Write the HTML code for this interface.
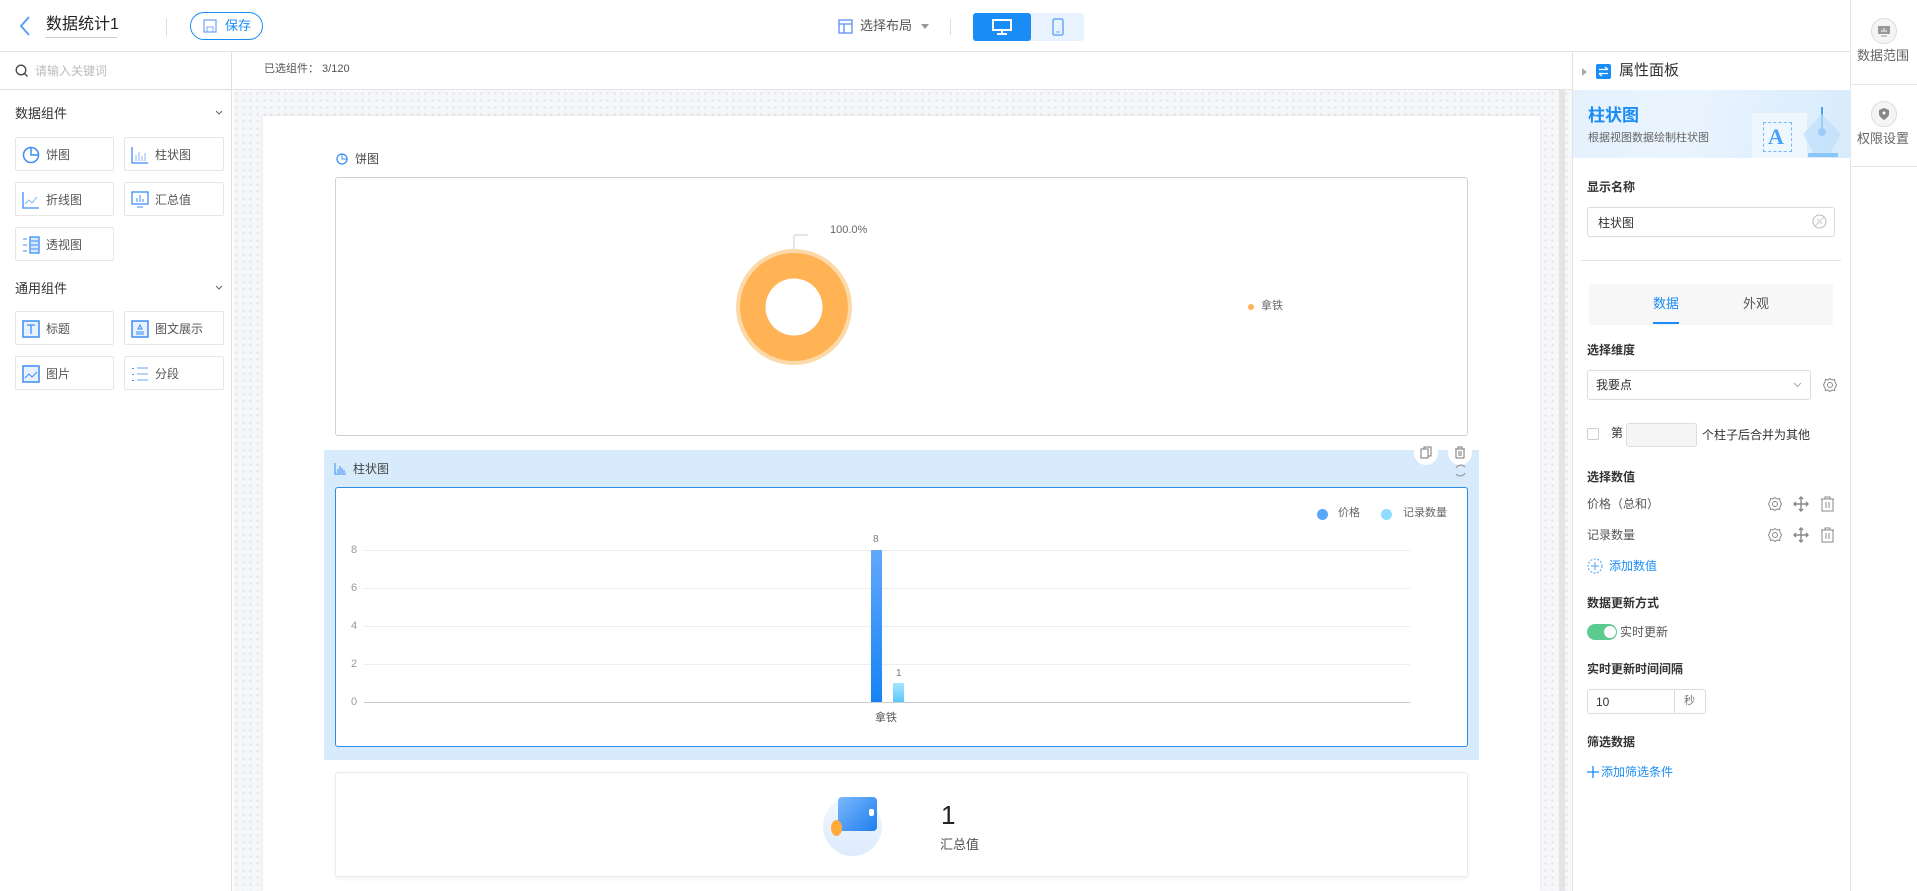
<!DOCTYPE html>
<html><head><meta charset="utf-8"><style>
*{box-sizing:border-box;margin:0;padding:0}
body{width:1917px;height:891px;overflow:hidden;background:#fff;font-family:"Liberation Sans","Noto Sans CJK SC",sans-serif;color:#333;font-size:12px;position:relative}
.a{position:absolute}
.t{position:absolute;white-space:nowrap;line-height:1}
.box{position:absolute;border:1px solid #e6e6e6;border-radius:2px;background:#fff}
.li{font-size:12px!important;color:#555}
</style></head><body>
<!-- top bar -->
<div class="a" style="left:0;top:0;width:1850px;height:52px;border-bottom:1px solid #e3e3e3;box-shadow:0 1px 3px rgba(0,0,0,.06)"></div>
<svg class="a" style="left:18px;top:15px" width="14" height="22"><path d="M11 2 L3 11 L11 20" stroke="#5aa0f7" stroke-width="2" fill="none"/></svg>
<div class="t" style="left:46px;top:17px;font-size:16px;color:#222">数据统计1</div>
<div class="a" style="left:45px;top:37px;width:72px;height:1px;background:#ccc"></div>
<div class="a" style="left:166px;top:18px;width:1px;height:18px;background:#ddd"></div>
<div class="a" style="left:190px;top:12px;width:73px;height:28px;border:1px solid #1a8cf5;border-radius:14px"></div>
<svg class="a" style="left:203px;top:19px" width="14" height="14"><rect x="1" y="1" width="12" height="12" fill="none" stroke="#7aa8f0" stroke-width="1.3"/><rect x="4" y="8" width="6" height="5" fill="none" stroke="#7aa8f0"/></svg>
<div class="t" style="left:225px;top:19px;font-size:13px;color:#1a8cf5">保存</div>
<svg class="a" style="left:838px;top:19px" width="15" height="15"><rect x="1" y="1" width="13" height="13" fill="none" stroke="#5a8ff0" stroke-width="1.3"/><path d="M1 5H14M6 5V14" stroke="#5a8ff0" stroke-width="1.3"/></svg>
<div class="t" style="left:860px;top:19px;font-size:13px;color:#555">选择布局</div>
<svg class="a" style="left:921px;top:24px" width="8" height="5"><path d="M0 0H8L4 5Z" fill="#999"/></svg>
<div class="a" style="left:950px;top:19px;width:1px;height:16px;background:#ddd"></div>
<div class="a" style="left:973px;top:13px;width:111px;height:28px;background:#e8f3ff;border-radius:3px"></div>
<div class="a" style="left:973px;top:13px;width:58px;height:28px;background:#1a8cf5;border-radius:3px"></div>
<svg class="a" style="left:992px;top:19px" width="20" height="16"><rect x="1" y="1" width="18" height="10" fill="none" stroke="#fff" stroke-width="2"/><path d="M10 11V14M5 15H15" stroke="#fff" stroke-width="2"/></svg>
<svg class="a" style="left:1052px;top:18px" width="12" height="18"><rect x="1" y="1" width="10" height="16" rx="1.5" fill="none" stroke="#6aa8f5" stroke-width="1.5"/><path d="M4 14H8" stroke="#6aa8f5"/></svg>

<!-- right rail -->
<div class="a" style="left:1850px;top:0;width:67px;height:891px;border-left:1px solid #e6e6e6;background:#fff"></div>
<div class="a" style="left:1871px;top:18px;width:26px;height:26px;border-radius:50%;border:1px solid #ddd;background:#f5f5f5"></div>
<svg class="a" style="left:1877px;top:25px" width="14" height="12"><rect x="1" y="1" width="12" height="8" fill="#999"/><path d="M4 11H10" stroke="#999"/><path d="M5 7V5M7 7V3M9 7V5" stroke="#fff"/></svg>
<div class="t" style="left:1857px;top:49px;font-size:13px;color:#666">数据范围</div>
<div class="a" style="left:1851px;top:84px;width:66px;height:1px;background:#e6e6e6"></div>
<div class="a" style="left:1871px;top:101px;width:26px;height:26px;border-radius:50%;border:1px solid #ddd;background:#f5f5f5"></div>
<svg class="a" style="left:1878px;top:107px" width="12" height="14"><path d="M6 1L11 3V7C11 10 6 13 6 13C6 13 1 10 1 7V3Z" fill="#888"/><circle cx="6" cy="6" r="1.5" fill="#fff"/></svg>
<div class="t" style="left:1857px;top:132px;font-size:13px;color:#666">权限设置</div>
<div class="a" style="left:1851px;top:166px;width:66px;height:1px;background:#e6e6e6"></div>

<!-- left panel -->
<div class="a" style="left:0;top:52px;width:232px;height:839px;border-right:1px solid #e0e0e0;background:#fff"></div>
<div class="a" style="left:0;top:89px;width:232px;height:1px;background:#ddd"></div>
<svg class="a" style="left:15px;top:64px" width="14" height="14"><circle cx="6" cy="6" r="4.8" fill="none" stroke="#444" stroke-width="1.3"/><path d="M9.5 9.5L12.5 12.5" stroke="#444" stroke-width="1.3"/></svg>
<div class="t" style="left:35px;top:65px;font-size:12px;color:#bbb">请输入关键词</div>
<div class="t" style="left:15px;top:107px;font-size:13px;color:#333">数据组件</div>
<svg class="a" style="left:215px;top:110px" width="8" height="6"><path d="M1 1L4 4L7 1" stroke="#666" fill="none"/></svg>
<div class="box" style="left:15px;top:137px;width:99px;height:34px"></div>
<div class="box" style="left:124px;top:137px;width:100px;height:34px"></div>
<div class="box" style="left:15px;top:182px;width:99px;height:34px"></div>
<div class="box" style="left:124px;top:182px;width:100px;height:34px"></div>
<div class="box" style="left:15px;top:227px;width:99px;height:34px"></div>
<svg class="a" style="left:22px;top:146px" width="18" height="18"><circle cx="9" cy="9" r="7.5" fill="none" stroke="#3d8ef5" stroke-width="1.5"/><path d="M9 2V9H16" stroke="#3d8ef5" stroke-width="1.5" fill="none"/></svg>
<div class="t li" style="left:46px;top:149px">饼图</div>
<svg class="a" style="left:131px;top:146px" width="18" height="18"><path d="M1 1V17H17" stroke="#3d8ef5" stroke-width="1.3" fill="none"/><path d="M5 15V9M8 15V6M11 15V10M14 15V7" stroke="#8ab8f5"/></svg>
<div class="t li" style="left:155px;top:149px">柱状图</div>
<svg class="a" style="left:22px;top:191px" width="18" height="18"><path d="M1 1V17H17" stroke="#3d8ef5" stroke-width="1.3" fill="none"/><path d="M3 13L7 9L10 12L15 6" stroke="#8ab8f5" fill="none"/></svg>
<div class="t li" style="left:46px;top:194px">折线图</div>
<svg class="a" style="left:131px;top:191px" width="18" height="18"><rect x="1" y="1" width="16" height="12" fill="none" stroke="#3d8ef5" stroke-width="1.3"/><path d="M6 11V7M9 11V4M12 11V8M6 16H12" stroke="#3d8ef5"/></svg>
<div class="t li" style="left:155px;top:194px">汇总值</div>
<svg class="a" style="left:22px;top:236px" width="18" height="18"><rect x="8" y="1" width="9" height="16" fill="#d8e8fc" stroke="#3d8ef5" stroke-width="1.3"/><path d="M1 3H5M1 9H5M1 15H5M9 5H16M9 9H16M9 13H16" stroke="#3d8ef5"/></svg>
<div class="t li" style="left:46px;top:239px">透视图</div>
<div class="t" style="left:15px;top:282px;font-size:13px;color:#333">通用组件</div>
<svg class="a" style="left:215px;top:285px" width="8" height="6"><path d="M1 1L4 4L7 1" stroke="#666" fill="none"/></svg>
<div class="box" style="left:15px;top:311px;width:99px;height:34px"></div>
<div class="box" style="left:124px;top:311px;width:100px;height:34px"></div>
<div class="box" style="left:15px;top:356px;width:99px;height:34px"></div>
<div class="box" style="left:124px;top:356px;width:100px;height:34px"></div>
<svg class="a" style="left:22px;top:320px" width="18" height="18"><rect x="1" y="1" width="16" height="16" fill="#e8f2fe" stroke="#3d8ef5" stroke-width="1.5"/><path d="M5 5H13M9 5V14" stroke="#3d8ef5" stroke-width="1.3"/></svg>
<div class="t li" style="left:46px;top:323px">标题</div>
<svg class="a" style="left:131px;top:320px" width="18" height="18"><rect x="1" y="1" width="16" height="16" fill="#e8f2fe" stroke="#3d8ef5" stroke-width="1.5"/><path d="M5 12H13M5 14H13M7 9L9 5L11 9Z" stroke="#3d8ef5" fill="none"/></svg>
<div class="t li" style="left:155px;top:323px">图文展示</div>
<svg class="a" style="left:22px;top:365px" width="18" height="18"><rect x="1" y="1" width="16" height="16" fill="#e8f2fe" stroke="#3d8ef5" stroke-width="1.5"/><path d="M3 13L7 9L10 12L15 7" stroke="#3d8ef5" fill="none"/></svg>
<div class="t li" style="left:46px;top:368px">图片</div>
<svg class="a" style="left:131px;top:365px" width="18" height="18"><path d="M2 3V4M2 9V10M2 15V16" stroke="#3d8ef5" stroke-width="2"/><path d="M6 3H17M6 9H17M6 15H17" stroke="#8ab8f5" stroke-width="1.3"/></svg>
<div class="t li" style="left:155px;top:368px">分段</div>

<!-- canvas -->
<div class="a" style="left:233px;top:52px;width:1339px;height:38px;background:#fff;border-bottom:1px solid #e3e3e3"></div>
<div class="t" style="left:264px;top:64px;font-size:11px;color:#555">已选组件：&nbsp;3/120</div>
<div class="a" style="left:233px;top:90px;width:1339px;height:801px;background-color:#f6f7f9;background-image:radial-gradient(#dfe1e6 1px,transparent 1.2px);background-size:7px 7px"></div>
<div class="a" style="left:1559px;top:90px;width:6px;height:801px;background:#e4e4e4"></div>
<div class="a" style="left:263px;top:116px;width:1277px;height:775px;background:#fff;box-shadow:0 0 4px rgba(0,0,0,.08)"></div>
<!-- pie -->
<svg class="a" style="left:336px;top:153px" width="12" height="12"><circle cx="6" cy="6" r="5" fill="none" stroke="#3d8ef5" stroke-width="1.3"/><path d="M6 1V6H11" stroke="#3d8ef5" fill="none"/></svg>
<div class="t" style="left:355px;top:153px;font-size:12px;color:#444">饼图</div>
<div class="a" style="left:335px;top:177px;width:1133px;height:259px;border:1px solid #d0d0d0;border-radius:3px"></div>
<svg class="a" style="left:730px;top:225px" width="140" height="150"><path d="M64 10V24M64 10H78" stroke="#ccc" fill="none"/><circle cx="64" cy="82" r="58" fill="#fcd9a8"/><circle cx="64" cy="82" r="54" fill="#ffb355"/><circle cx="64" cy="82" r="28.5" fill="#fff"/></svg>
<div class="t" style="left:830px;top:225px;font-size:11px;color:#666">100.0%</div>
<div class="a" style="left:1248px;top:304px;width:6px;height:6px;border-radius:50%;background:#ffb355"></div>
<div class="t" style="left:1261px;top:301px;font-size:11px;color:#666">拿铁</div>
<!-- bar selected -->
<div class="a" style="left:324px;top:450px;width:1155px;height:310px;background:#d7ebfc"></div>
<div class="a" style="left:1414px;top:441px;width:24px;height:24px;border-radius:50%;background:#fff"></div>
<div class="a" style="left:1448px;top:441px;width:24px;height:24px;border-radius:50%;background:#fff"></div>
<svg class="a" style="left:1420px;top:446px" width="12" height="13"><rect x="4" y="1" width="7" height="9" fill="none" stroke="#777"/><rect x="1" y="3" width="7" height="9" fill="#fff" stroke="#777"/></svg>
<svg class="a" style="left:1454px;top:446px" width="12" height="13"><path d="M1 3H11M4 3V1H8V3M2 3V12H10V3M5 5V10M7 5V10" stroke="#777" fill="none"/></svg>
<svg class="a" style="left:1453px;top:463px" width="15" height="15"><path d="M3 5A5.5 5.5 0 0 1 12 4M12 10A5.5 5.5 0 0 1 3 11" stroke="#999" fill="none" stroke-width="1.2"/></svg>
<svg class="a" style="left:334px;top:463px" width="12" height="12"><path d="M1 0V11H12" stroke="#3d8ef5" fill="none"/><path d="M4 10V6M6 10V3M8 10V5M10 10V7" stroke="#3d8ef5"/></svg>
<div class="t" style="left:353px;top:463px;font-size:12px;color:#444">柱状图</div>
<div class="a" style="left:335px;top:487px;width:1133px;height:260px;border:1px solid #2b8ce8;border-radius:3px;background:#fff"></div>
<div class="a" style="left:1317px;top:509px;width:11px;height:11px;border-radius:50%;background:#5aa7fa"></div>
<div class="t" style="left:1338px;top:508px;font-size:11px;color:#666">价格</div>
<div class="a" style="left:1381px;top:509px;width:11px;height:11px;border-radius:50%;background:#8fdcfe"></div>
<div class="t" style="left:1403px;top:508px;font-size:11px;color:#666">记录数量</div>
<div class="a" style="left:364px;top:550px;width:1046px;height:1px;background:#eee"></div>
<div class="a" style="left:364px;top:588px;width:1046px;height:1px;background:#eee"></div>
<div class="a" style="left:364px;top:626px;width:1046px;height:1px;background:#eee"></div>
<div class="a" style="left:364px;top:664px;width:1046px;height:1px;background:#eee"></div>
<div class="a" style="left:364px;top:702px;width:1046px;height:1px;background:#ccc"></div>
<div class="t" style="left:351px;top:545px;font-size:11px;color:#999">8</div>
<div class="t" style="left:351px;top:583px;font-size:11px;color:#999">6</div>
<div class="t" style="left:351px;top:621px;font-size:11px;color:#999">4</div>
<div class="t" style="left:351px;top:659px;font-size:11px;color:#999">2</div>
<div class="t" style="left:351px;top:697px;font-size:11px;color:#999">0</div>
<div class="a" style="left:871px;top:550px;width:11px;height:152px;background:linear-gradient(#62a8fb,#1683f5)"></div>
<div class="a" style="left:893px;top:683px;width:11px;height:19px;background:linear-gradient(#a5e4ff,#5cc8fa)"></div>
<div class="t" style="left:873px;top:535px;font-size:10px;color:#777">8</div>
<div class="t" style="left:896px;top:669px;font-size:10px;color:#777">1</div>
<div class="t" style="left:875px;top:713px;font-size:11px;color:#555">拿铁</div>
<!-- summary -->
<div class="a" style="left:335px;top:772px;width:1133px;height:105px;border:1px solid #eaeaea;border-radius:3px;box-shadow:0 2px 4px rgba(0,0,0,.05)"></div>
<div class="a" style="left:823px;top:797px;width:59px;height:59px;border-radius:50%;background:linear-gradient(#f3f8ff,#dcebfc)"></div>
<div class="a" style="left:838px;top:797px;width:39px;height:34px;border-radius:4px;background:linear-gradient(135deg,#7ab8fb,#1f7ef0)"></div>
<div class="a" style="left:869px;top:809px;width:5px;height:7px;border-radius:2px;background:#fff"></div>
<div class="a" style="left:831px;top:820px;width:11px;height:16px;border-radius:50%;background:#ffab3b"></div>
<div class="t" style="left:941px;top:802px;font-size:26px;color:#222">1</div>
<div class="t" style="left:940px;top:838px;font-size:13px;color:#555">汇总值</div>

<!-- right property panel -->
<div class="a" style="left:1572px;top:52px;width:278px;height:839px;background:#fff;border-left:1px solid #e3e3e3"></div>
<svg class="a" style="left:1582px;top:68px" width="5" height="8"><path d="M0 0L5 4L0 8Z" fill="#aaa"/></svg>
<div class="a" style="left:1596px;top:64px;width:15px;height:15px;border-radius:2px;background:#1a8cf5"></div>
<svg class="a" style="left:1598px;top:66px" width="11" height="11"><path d="M1 3.5H10M7 1L10 3.5M1 7.5H10M4 10L1 7.5" stroke="#fff" fill="none" stroke-width="1.3"/></svg>
<div class="t" style="left:1619px;top:63px;font-size:15px;color:#333">属性面板</div>
<div class="a" style="left:1573px;top:90px;width:277px;height:68px;background:linear-gradient(100deg,#e4f1fd 0%,#eaf4fe 40%,#d8ebfc 100%)"></div>
<div class="a" style="left:1752px;top:113px;width:55px;height:45px;background:#eef6fe"></div>
<div class="a" style="left:1763px;top:122px;width:29px;height:30px;border:1px dashed #7ab8f5"></div>
<div class="t" style="left:1768px;top:126px;font-size:22px;font-weight:bold;color:#4aa0f5;font-family:'Liberation Serif',serif">A</div>
<svg class="a" style="left:1800px;top:102px" width="45" height="56"><path d="M22 5V30" stroke="#4aa0f5" stroke-width="2"/><circle cx="22" cy="30" r="4" fill="#4aa0f5"/><path d="M22 12L41 32L30 52H14L3 32Z" fill="#bfe0fb" opacity=".7"/><rect x="8" y="51" width="30" height="4" fill="#8ac6f8"/></svg>
<div class="t" style="left:1588px;top:107px;font-size:17px;font-weight:bold;color:#1a8cf5">柱状图</div>
<div class="t" style="left:1588px;top:133px;font-size:11px;color:#666">根据视图数据绘制柱状图</div>
<div class="t" style="left:1587px;top:181px;font-size:12px;color:#333;font-weight:bold">显示名称</div>
<div class="a" style="left:1587px;top:207px;width:248px;height:30px;border:1px solid #dcdcdc;border-radius:3px"></div>
<div class="t" style="left:1598px;top:217px;font-size:12px;color:#333">柱状图</div>
<svg class="a" style="left:1812px;top:214px" width="15" height="15"><circle cx="7.5" cy="7.5" r="6.5" fill="none" stroke="#bbb"/><path d="M3 12L12 3M5 5L10 10" stroke="#ccc"/></svg>
<div class="a" style="left:1581px;top:260px;width:260px;height:1px;background:#e3e3e3"></div>
<div class="a" style="left:1589px;top:284px;width:244px;height:41px;background:#f7f7f8"></div>
<div class="t" style="left:1653px;top:297px;font-size:13px;color:#1a8cf5">数据</div>
<div class="a" style="left:1653px;top:322px;width:26px;height:2px;background:#1a8cf5"></div>
<div class="t" style="left:1743px;top:297px;font-size:13px;color:#555">外观</div>
<div class="t" style="left:1587px;top:344px;font-size:12px;color:#333;font-weight:bold">选择维度</div>
<div class="a" style="left:1587px;top:370px;width:224px;height:30px;border:1px solid #dcdcdc;border-radius:3px"></div>
<div class="t" style="left:1596px;top:379px;font-size:12px;color:#333">我要点</div>
<svg class="a" style="left:1793px;top:382px" width="9" height="6"><path d="M1 1L4.5 4.5L8 1" stroke="#aaa" fill="none"/></svg>
<svg class="a" style="left:1822px;top:377px" width="16" height="16"><circle cx="8" cy="8" r="2.5" fill="none" stroke="#888"/><path d="M8 1.5L10 3L12.5 2.5L13 5L14.5 8L13 11L12.5 13.5L10 13L8 14.5L6 13L3.5 13.5L3 11L1.5 8L3 5L3.5 2.5L6 3Z" fill="none" stroke="#888"/></svg>
<div class="a" style="left:1587px;top:428px;width:12px;height:12px;border:1px solid #ccc;border-radius:2px"></div>
<div class="t" style="left:1611px;top:427px;font-size:12px;color:#333">第</div>
<div class="a" style="left:1626px;top:423px;width:71px;height:24px;border:1px solid #ddd;border-radius:3px;background:#f5f5f5"></div>
<div class="t" style="left:1702px;top:429px;font-size:12px;color:#333">个柱子后合并为其他</div>
<div class="t" style="left:1587px;top:471px;font-size:12px;color:#333;font-weight:bold">选择数值</div>
<div class="t" style="left:1587px;top:498px;font-size:12px;color:#555">价格（总和）</div>
<div class="t" style="left:1587px;top:529px;font-size:12px;color:#555">记录数量</div>
<svg class="a" style="left:1767px;top:496px" width="78" height="48">
<g fill="none" stroke="#888"><circle cx="8" cy="8" r="2.5"/><path d="M8 1.5L10 3L12.5 2.5L13 5L14.5 8L13 11L12.5 13.5L10 13L8 14.5L6 13L3.5 13.5L3 11L1.5 8L3 5L3.5 2.5L6 3Z"/>
<path d="M34 1V15M27 8H41M32 3L34 1L36 3M32 13L34 15L36 13M29 6L27 8L29 10M39 6L41 8L39 10" stroke-width="1.4"/>
<path d="M54 3H67M58 3V1H63V3M55 3V15H66V3M59 6V12M62 6V12"/>
<g transform="translate(0,31)"><circle cx="8" cy="8" r="2.5"/><path d="M8 1.5L10 3L12.5 2.5L13 5L14.5 8L13 11L12.5 13.5L10 13L8 14.5L6 13L3.5 13.5L3 11L1.5 8L3 5L3.5 2.5L6 3Z"/>
<path d="M34 1V15M27 8H41M32 3L34 1L36 3M32 13L34 15L36 13M29 6L27 8L29 10M39 6L41 8L39 10" stroke-width="1.4"/>
<path d="M54 3H67M58 3V1H63V3M55 3V15H66V3M59 6V12M62 6V12"/></g></g></svg>
<svg class="a" style="left:1587px;top:558px" width="16" height="16"><circle cx="8" cy="8" r="7" fill="none" stroke="#4aa0f5" stroke-dasharray="2 1.5"/><path d="M8 4V12M4 8H12" stroke="#4aa0f5"/></svg>
<div class="t" style="left:1609px;top:560px;font-size:12px;color:#1a8cf5">添加数值</div>
<div class="t" style="left:1587px;top:597px;font-size:12px;color:#333;font-weight:bold">数据更新方式</div>
<div class="a" style="left:1587px;top:624px;width:30px;height:16px;border-radius:8px;background:#5ccb8f"></div>
<div class="a" style="left:1604px;top:626px;width:12px;height:12px;border-radius:50%;background:#fff"></div>
<div class="t" style="left:1620px;top:626px;font-size:12px;color:#555">实时更新</div>
<div class="t" style="left:1587px;top:663px;font-size:12px;color:#333;font-weight:bold">实时更新时间间隔</div>
<div class="a" style="left:1587px;top:689px;width:119px;height:25px;border:1px solid #dcdcdc;border-radius:3px"></div>
<div class="a" style="left:1674px;top:690px;width:1px;height:23px;background:#dcdcdc"></div>
<div class="t" style="left:1596px;top:696px;font-size:12px;color:#333">10</div>
<div class="t" style="left:1684px;top:696px;font-size:11px;color:#777">秒</div>
<div class="t" style="left:1587px;top:736px;font-size:12px;color:#333;font-weight:bold">筛选数据</div>
<svg class="a" style="left:1587px;top:766px" width="12" height="12"><path d="M6 0V12M0 6H12" stroke="#1a8cf5" stroke-width="1.3"/></svg>
<div class="t" style="left:1601px;top:766px;font-size:12px;color:#1a8cf5">添加筛选条件</div>
</body></html>
